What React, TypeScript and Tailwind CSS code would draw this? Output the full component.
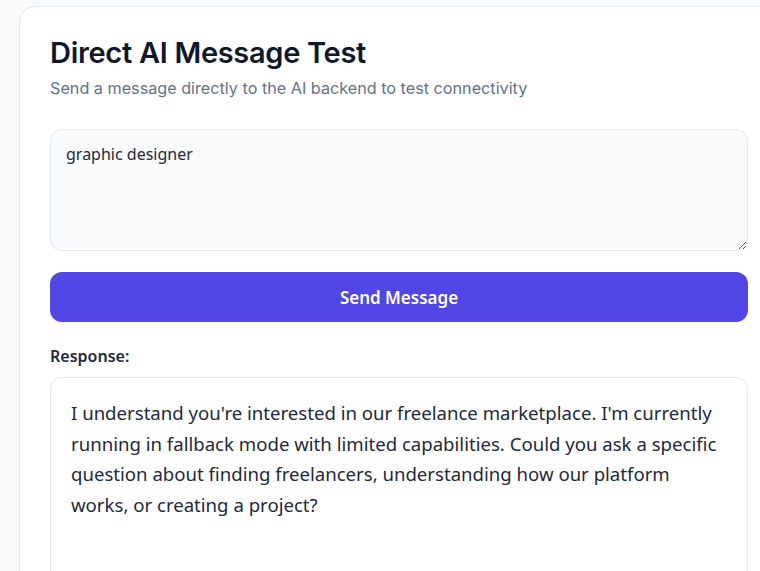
export default function App() {
  return (
    <div className="w-[760px] h-[571px] overflow-hidden bg-[#f8fafc]">
      <div className="ml-[19px] mt-[6px] w-[761px] min-h-[600px] bg-white border border-[#e2e8f0] rounded-2xl px-[30px] pt-[28px]">
        <h1 className="font-['Inter',sans-serif] text-[29px] leading-[36px] font-semibold text-[#0f172a] tracking-[-0.3px]">
          Direct AI Message Test
        </h1>
        <p className="font-['Inter',sans-serif] text-[16.2px] text-[#64748b] mt-[5px]">
          Send a message directly to the AI backend to test connectivity
        </p>

        <textarea
          defaultValue="graphic designer"
          className="block mt-[29px] w-[698px] h-[122px] bg-[#f8fafc] border border-[#e2e8f0] rounded-xl px-[15px] py-[12px] font-['Noto_Sans',sans-serif] text-base text-[#1e293b] outline-none"
        />

        <button className="mt-[21px] w-[698px] h-[50px] rounded-xl bg-[#4f46e5] text-white font-['Noto_Sans',sans-serif] text-[17px] font-semibold">
          Send Message
        </button>

        <div className="mt-[22px] font-['Noto_Sans',sans-serif] text-base font-semibold text-[#1e293b]">
          Response:
        </div>

        <div className="mt-[9px] w-[698px] h-[220px] border border-[#e2e8f0] rounded-xl px-[20px] py-[20px] font-['Noto_Sans',sans-serif] text-[18.6px] leading-[30.4px] text-[#1e293b]">
          I understand you're interested in our freelance marketplace. I'm
          currently running in fallback mode with limited capabilities. Could
          you ask a specific question about finding freelancers, understanding
          how our platform works, or creating a project?
        </div>
      </div>
    </div>
  );
}
